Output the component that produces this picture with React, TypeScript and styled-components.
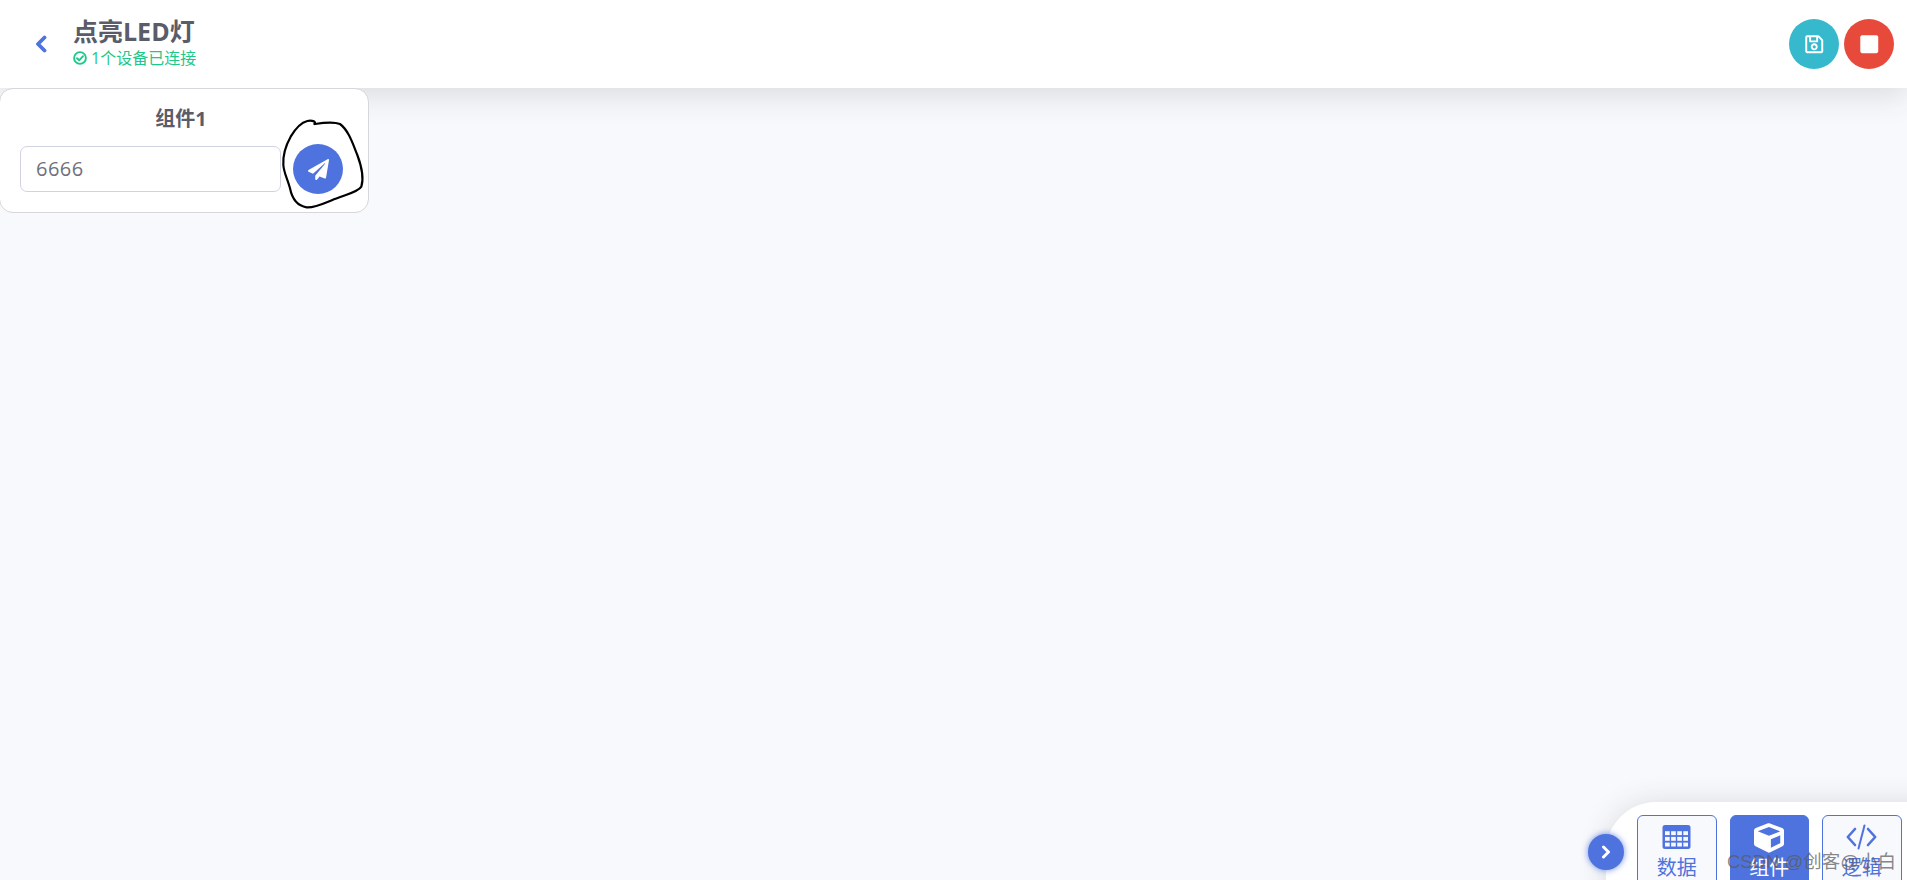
import React from "react";
import styled, { createGlobalStyle } from "styled-components";
import { FaPaperPlane, FaRegSave, FaStop, FaCube } from "react-icons/fa";

const Global = createGlobalStyle`
  html, body { margin: 0; padding: 0; height: 100%; overflow: hidden; background: #f8f9fc; }
  body { font-family: "Open Sans", "Noto Sans CJK SC", sans-serif; color: #5a5c69; }
`;

const Page = styled.div`
  position: relative;
  width: 1907px;
  height: 880px;
  overflow: hidden;
  background: #f8f9fc;
`;

const Header = styled.header`
  position: relative;
  height: 88px;
  box-sizing: border-box;
  display: flex;
  align-items: center;
  padding: 0 13px 0 35px;
  background: #fff;
  box-shadow: 0 8px 28px rgba(58, 59, 69, 0.15);
`;

const BackLink = styled.a`
  display: flex;
  color: #4e73df;
  margin: 0 26px 0 0;
`;

const TitleBlock = styled.div`
  display: flex;
  flex-direction: column;
  flex: 1;
  margin-top: -4px;
`;

const Title = styled.h1`
  margin: 0 0 2px;
  font-size: 25px;
  line-height: 30px;
  font-weight: 700;
  color: #5a5c69;
`;

const Status = styled.div`
  display: flex;
  align-items: center;
  gap: 4px;
  font-size: 16px;
  line-height: 20px;
  color: #1cc88a;
`;

const Actions = styled.div`
  display: flex;
  gap: 5px;
`;

const RoundButton = styled.button<{ $color: string; $size?: number; $icon?: number }>`
  width: ${(p) => p.$size ?? 50}px;
  height: ${(p) => p.$size ?? 50}px;
  flex: none;
  border: none;
  border-radius: 50%;
  padding: 0;
  display: flex;
  align-items: center;
  justify-content: center;
  color: #fff;
  background: ${(p) => p.$color};
  font-size: ${(p) => p.$icon ?? 20}px;
`;

const Canvas = styled.main`
  position: relative;
`;

const Card = styled.section`
  position: relative;
  width: 370px;
  height: 125px;
  margin-left: -1px;
  box-sizing: border-box;
  background: #fff;
  border: 1px solid #d6d6dc;
  border-radius: 14px;
  padding: 17px 7px 0 20px;
`;

const CardTitle = styled.h2`
  margin: 0 0 12px;
  padding-right: 19px;
  text-align: center;
  font-size: 20px;
  line-height: 26px;
  font-weight: 700;
  color: #5a5c69;
`;

const InputRow = styled.div`
  display: flex;
  align-items: center;
  gap: 12px;
`;

const Field = styled.input`
  width: 261px;
  height: 46px;
  box-sizing: border-box;
  border: 1px solid #d1d3e2;
  border-radius: 7px;
  padding: 0 15px 2px;
  background: #fff;
  font: inherit;
  font-size: 20px;
  letter-spacing: 0.5px;
  color: #6e707e;
  outline: none;
`;

const Scribble = styled.svg`
  position: absolute;
  left: 270px;
  top: 22px;
  width: 110px;
  height: 105px;
  pointer-events: none;
`;

const Dock = styled.nav`
  position: absolute;
  left: 1606px;
  top: 802px;
  width: 340px;
  height: 120px;
  box-sizing: border-box;
  padding: 13px 0 0 31px;
  display: flex;
  align-items: flex-start;
  gap: 13px;
  background: #fff;
  border-radius: 50px 0 0 0;
  box-shadow: 0 0 28px rgba(58, 59, 69, 0.15);
`;

const Toggle = styled(RoundButton)`
  position: absolute;
  left: 1588px;
  top: 834px;
  box-shadow: 0 0 6px rgba(78, 115, 223, 0.8);
`;

const Tab = styled.div<{ $active?: boolean }>`
  width: 79.5px;
  height: 90px;
  box-sizing: border-box;
  padding-top: 8px;
  display: flex;
  flex-direction: column;
  align-items: center;
  border: 1px solid #4e73df;
  border-radius: 6px;
  background: ${(p) => (p.$active ? "#4e73df" : "#f8f9fc")};
  color: ${(p) => (p.$active ? "#fff" : "#4e73df")};
  font-size: 20px;
  line-height: 30px;
  svg { flex: none; height: 26px; width: 31px; }
`;

const CubeGlyph = styled(FaCube)`
  && { height: 30px; width: 30px; margin: -1px 0 -3px; }
`;

const TabLabel = styled.span`
  margin-top: 3px;
`;

const Watermark = styled.div`
  position: absolute;
  left: 1727px;
  top: 849px;
  font-family: "Liberation Sans", "Noto Sans CJK SC", sans-serif;
  font-size: 18.5px;
  line-height: 26px;
  white-space: nowrap;
  color: rgba(90, 90, 90, 0.72);
  pointer-events: none;
`;

const ChevronLeft = () => (
  <svg width="12" height="18" viewBox="0 0 12 18" fill="none" stroke="currentColor" strokeWidth="3.8" strokeLinecap="round" strokeLinejoin="round">
    <path d="M9.5 2.5 L3 9 L9.5 15.5" />
  </svg>
);

const ChevronRight = () => (
  <svg width="10" height="14" viewBox="0 0 10 14" fill="none" stroke="currentColor" strokeWidth="3" strokeLinecap="round" strokeLinejoin="round">
    <path d="M2.5 2 L7.5 7 L2.5 12" />
  </svg>
);

const CheckCircle = () => (
  <svg width="14" height="14" viewBox="0 0 14 14" fill="none" stroke="currentColor" strokeWidth="1.9">
    <circle cx="7" cy="7" r="5.9" />
    <path d="M4 7.2 L6.2 9.3 L10 5.2" strokeLinecap="round" strokeLinejoin="round" />
  </svg>
);

const TableIcon = () => (
  <svg viewBox="0 0 31 26">
    <rect x="1.5" y="1" width="28" height="24" rx="2.5" fill="#4e73df" />
    <g fill="#f8f9fc">
      {[7.2, 12.9, 18.6].map((y) =>
        [0, 1, 2, 3].map((i) => (
          <rect key={`${y}-${i}`} x={4 + i * 6.1} y={y} width="4.7" height="3.9" />
        ))
      )}
    </g>
  </svg>
);

const CodeIcon = () => (
  <svg viewBox="0 0 31 26" fill="none" stroke="currentColor" strokeWidth="2.6" strokeLinecap="round" strokeLinejoin="round">
    <path d="M9 5 L1.8 13 L9 21" />
    <path d="M22 5 L29.2 13 L22 21" />
    <path d="M18.5 1.5 L12.5 24.5" strokeWidth="2" />
  </svg>
);

export default function App() {
  return (
    <Page>
      <Global />
      <Header>
        <BackLink><ChevronLeft /></BackLink>
        <TitleBlock>
          <Title>点亮LED灯</Title>
          <Status><CheckCircle />1个设备已连接</Status>
        </TitleBlock>
        <Actions>
          <RoundButton $color="#36b9cc" $icon={20.5}><FaRegSave /></RoundButton>
          <RoundButton $color="#e74a3b" $icon={20.5}><FaStop /></RoundButton>
        </Actions>
      </Header>
      <Canvas>
        <Card>
          <CardTitle>组件1</CardTitle>
          <InputRow>
            <Field defaultValue="6666" />
            <RoundButton $color="#4e73df" $icon={21}><FaPaperPlane /></RoundButton>
          </InputRow>
        </Card>
        <Scribble viewBox="0 0 330 315" fill="none" stroke="#000" strokeWidth="6.5" strokeLinecap="round" strokeLinejoin="round">
          <path d="M133 42 C140 34 125 30 112 33 C92 38 75 58 62 80 C48 105 38 135 40 165 C42 190 52 205 60 235 C66 265 82 288 110 292 C140 294 170 275 205 263 C235 252 265 245 274 230 C282 205 275 170 262 135 C248 100 235 60 210 42 C190 34 160 38 135 42" />
        </Scribble>
      </Canvas>
      <Dock>
        <Tab><TableIcon /><TabLabel>数据</TabLabel></Tab>
        <Tab $active><CubeGlyph /><TabLabel>组件</TabLabel></Tab>
        <Tab><CodeIcon /><TabLabel>逻辑</TabLabel></Tab>
      </Dock>
      <Toggle $color="#4e73df" $size={36}><ChevronRight /></Toggle>
      <Watermark>CSDN @创客@小白</Watermark>
    </Page>
  );
}
